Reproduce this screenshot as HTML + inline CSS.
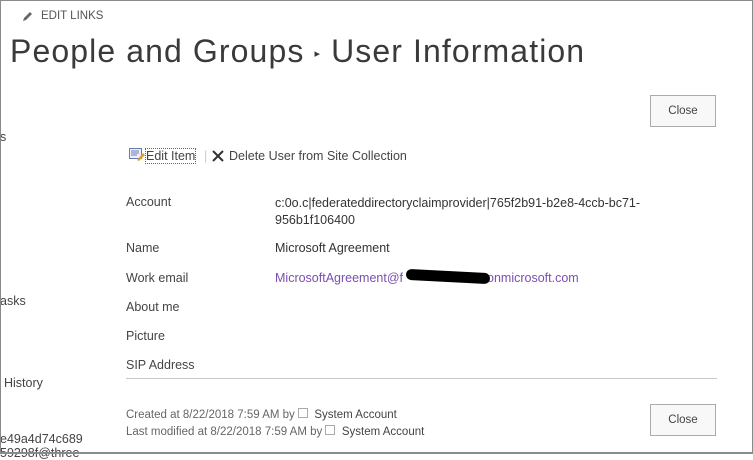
<!DOCTYPE html>
<html><head><meta charset="utf-8"><style>
body{margin:0;width:753px;height:454px;overflow:hidden;background:#fff;font-family:"Liberation Sans",sans-serif;position:relative;color:#444}
.frame{position:absolute;left:0;top:0;width:751px;height:451px;border:1px solid #8a8a8a;border-bottom:2px solid #8a8a8a;z-index:5}
.a{position:absolute;white-space:nowrap}
.lbl{font-size:12.5px;color:#444}
.val{font-size:12.5px;color:#333}
.btn{position:absolute;left:650px;width:64px;height:30px;border:1px solid #ababab;background:#f8f8f8;font-size:11.5px;color:#444;text-align:center;line-height:30px}
</style></head><body>
<div class="frame"></div>
<svg class="a" style="left:22px;top:10px" width="12" height="12" viewBox="0 0 12 12"><path d="M1 11 L2 8 L8 2 L10 4 L4 10 Z" fill="#666"/></svg>
<div class="a" style="left:41px;top:10px;font-size:11.5px;color:#555">EDIT LINKS</div>
<div class="a" style="left:10px;top:33px;font-size:32px;color:#3a3a3a;letter-spacing:1.1px">People and Groups <span style="font-size:11px;vertical-align:middle">&#9656;</span> User Information</div>
<div class="btn" style="top:95px">Close</div>
<div class="a lbl" style="left:0;top:130px">s</div>
<div class="a lbl" style="left:0;top:294px">asks</div>
<div class="a lbl" style="left:4px;top:376px">History</div>
<div class="a lbl" style="left:0;top:432px">e49a4d74c689</div>
<div class="a lbl" style="left:0;top:446px">59298f@three</div>
<svg class="a" style="left:129px;top:148px" width="16" height="14" viewBox="0 0 16 14"><rect x="0.5" y="0.5" width="12" height="10" fill="#eef" stroke="#6a7bb0"/><path d="M2 3h8M2 5h8M2 7h6" stroke="#6a7bb0"/><path d="M8 12 L14 5 L16 7 L10 13 Z" fill="#e0a030"/></svg>
<div class="a" style="left:146px;top:149px;font-size:12.5px;color:#444;outline:1px dotted #666">Edit Item</div>
<div class="a" style="left:204px;top:149px;font-size:12.5px;color:#ccc">|</div>
<svg class="a" style="left:212px;top:150px" width="12" height="12" viewBox="0 0 12 12"><path d="M1 1L11 11M11 1L1 11" stroke="#333" stroke-width="2"/></svg>
<div class="a" style="left:229px;top:149px;font-size:12.5px;color:#444">Delete User from Site Collection</div>
<div class="a lbl" style="left:126px;top:195px">Account</div>
<div class="a val" style="left:275px;top:195px;line-height:17px">c:0o.c|federateddirectoryclaimprovider|765f2b91-b2e8-4ccb-bc71-<br>956b1f106400</div>
<div class="a lbl" style="left:126px;top:241px">Name</div>
<div class="a val" style="left:275px;top:241px">Microsoft Agreement</div>
<div class="a lbl" style="left:126px;top:271px">Work email</div>
<div class="a val" style="left:275px;top:271px;color:#7a4fb0">MicrosoftAgreement@f<span style="display:inline-block;width:84px"></span>onmicrosoft.com</div>
<div class="a" style="left:406px;top:271px;width:84px;height:11px;background:#000;border-radius:6px;transform:rotate(3deg)"></div>
<div class="a lbl" style="left:126px;top:300px">About me</div>
<div class="a lbl" style="left:126px;top:329px">Picture</div>
<div class="a lbl" style="left:126px;top:358px">SIP Address</div>
<div class="a" style="left:126px;top:378px;width:591px;height:1px;background:#c8c8c8"></div>
<div class="a" style="left:126px;top:408px;font-size:11.5px;color:#666">Created at 8/22/2018 7:59 AM by <span style="display:inline-block;width:8px;height:8px;border:1px solid #aaa"></span>&nbsp; <span style="color:#444">System Account</span></div>
<div class="a" style="left:126px;top:425px;font-size:11.5px;color:#666">Last modified at 8/22/2018 7:59 AM by <span style="display:inline-block;width:8px;height:8px;border:1px solid #aaa"></span>&nbsp; <span style="color:#444">System Account</span></div>
<div class="btn" style="top:404px">Close</div>
</body></html>
